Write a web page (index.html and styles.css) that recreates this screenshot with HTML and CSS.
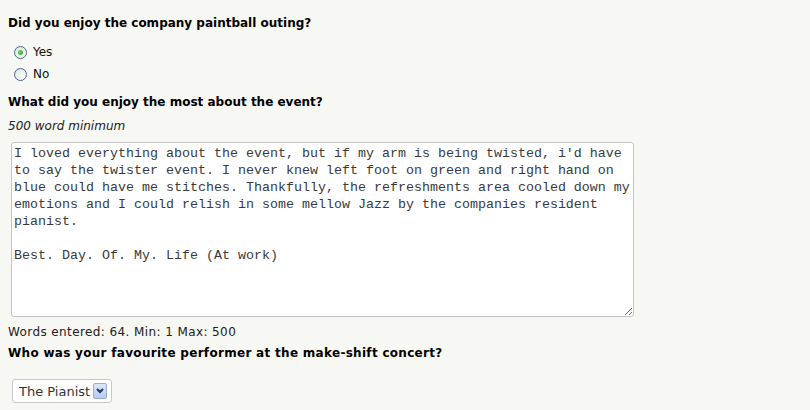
FILE: index.html
```html
<!DOCTYPE html>
<html lang="en">
<head>
<meta charset="utf-8">
<title>Survey</title>
<link rel="stylesheet" href="styles.css">
</head>
<body>
<form class="survey">
  <h2 class="question q-first">Did you enjoy the company paintball outing?</h2>
  <div class="options">
    <label class="option"><input type="radio" name="enjoy" class="radio" checked><span>Yes</span></label>
    <label class="option"><input type="radio" name="enjoy" class="radio"><span>No</span></label>
  </div>
  <h2 class="question q-second">What did you enjoy the most about the event?</h2>
  <p class="note">500 word minimum</p>
  <textarea class="answer">I loved everything about the event, but if my arm is being twisted, i'd have to say the twister event. I never knew left foot on green and right hand on blue could have me stitches. Thankfully, the refreshments area cooled down my emotions and I could relish in some mellow Jazz by the companies resident pianist.

Best. Day. Of. My. Life (At work)</textarea>
  <p class="count">Words entered: 64. Min: 1 Max: 500</p>
  <h2 class="question q-third">Who was your favourite performer at the make-shift concert?</h2>
  <div class="select-box">
    <select class="select">
      <option>The Pianist</option>
      <option>The Drummer</option>
    </select>
    <span class="select-btn">
      <svg width="8" height="6" viewBox="0 0 8 6"><path d="M1 1 L4 4 L7 1" fill="none" stroke="#1e3764" stroke-width="2"/></svg>
    </span>
  </div>
</form>
</body>
</html>
```
FILE: styles.css
```css
html, body {
  margin: 0;
  background: #f7f7f3;
}
body {
  padding: 8px;
  font-family: "DejaVu Sans", Verdana, sans-serif;
  font-size: 12px;
  line-height: 15px;
  color: #000;
}
.survey {
  display: flex;
  flex-direction: column;
  align-items: flex-start;
}
.question {
  margin: 0;
  font-size: 12px;
  font-weight: bold;
  line-height: 15px;
}
.q-first { margin-top: 8px; }
.q-second { margin-top: 10px; }
.q-third { margin-top: 6px; letter-spacing: 0.3px; }
.options {
  margin-top: 10px;
  display: flex;
  flex-direction: column;
}
.option {
  height: 22px;
  display: flex;
  align-items: center;
  color: #111;
}
.radio {
  appearance: none;
  -webkit-appearance: none;
  width: 13px;
  height: 13px;
  margin: 0 6px 0 6px;
  border: 1px solid #4b6a8c;
  border-radius: 50%;
  background: radial-gradient(circle at 65% 70%, #ffffff 0%, #eef0ec 50%, #d6d9d6 100%);
  display: flex;
  align-items: center;
  justify-content: center;
  box-sizing: border-box;
}
.radio:checked::after {
  content: "";
  width: 5px;
  height: 5px;
  border-radius: 50%;
  background: radial-gradient(circle at 40% 40%, #6ad56a, #21a121);
}
.note {
  margin: 9px 0 0 0;
  font-style: italic;
  color: #222;
}
.answer {
  margin: 8px 0 0 3px;
  width: 623px;
  height: 175px;
  box-sizing: border-box;
  padding: 2px;
  border: 1px solid #c4c4c4;
  border-radius: 3px;
  background: #fff;
  font-family: "Liberation Mono", "Courier New", monospace;
  font-size: 13.33px;
  line-height: 17px;
  color: #3a3a3a;
  resize: both;
  outline: none;
}
.count {
  margin: 8px 0 0 0;
  color: #222;
  letter-spacing: 0.4px;
}
.select-box {
  margin: 18px 0 0 4px;
  width: 100px;
  height: 24px;
  box-sizing: border-box;
  border: 1px solid #c8c8c8;
  border-radius: 3px;
  background: #fff;
  display: flex;
  align-items: center;
  padding: 0 4px 0 6px;
}
.select {
  appearance: none;
  -webkit-appearance: none;
  border: none;
  background: transparent;
  padding: 0;
  margin: 0;
  flex: 1;
  min-width: 0;
  font-family: "DejaVu Sans", Verdana, sans-serif;
  font-size: 13px;
  color: #333;
  outline: none;
}
.select-btn {
  width: 14px;
  height: 16px;
  box-sizing: border-box;
  border: 1px solid #98acd4;
  border-radius: 2px;
  background: linear-gradient(#dde7f8, #b8cbee);
  display: flex;
  align-items: center;
  justify-content: center;
}
```
